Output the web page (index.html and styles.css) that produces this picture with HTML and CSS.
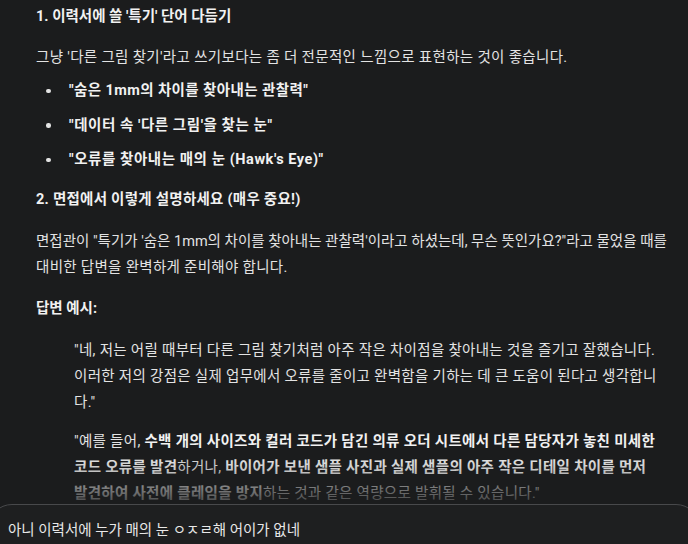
FILE: index.html
```html
<!DOCTYPE html>
<html lang="ko">
<head>
<meta charset="utf-8">
<link rel="stylesheet" href="styles.css">
</head>
<body>
<main class="chat">
  <h3 class="sec-title">1. 이력서에 쓸 '특기' 단어 다듬기</h3>
  <p class="para para-one">그냥 '다른 그림 찾기'라고 쓰기보다는 좀 더 전문적인 느낌으로 표현하는 것이 좋습니다.</p>
  <ul class="bullets">
    <li><b>"숨은 1mm의 차이를 찾아내는 관찰력"</b></li>
    <li><b>"데이터 속 '다른 그림'을 찾는 눈"</b></li>
    <li><b>"오류를 찾아내는 매의 눈 (Hawk's Eye)"</b></li>
  </ul>
  <h3 class="sec-title sec-two">2. 면접에서 이렇게 설명하세요 (매우 중요!)</h3>
  <p class="para para-two">면접관이 "특기가 '숨은 1mm의 차이를 찾아내는 관찰력'이라고 하셨는데, 무슨 뜻인가요?"라고 물었을 때를<br><span class="wide">대비한 답변을 완벽하게 준비해야 합니다.</span></p>
  <p class="para label"><b>답변 예시:</b></p>
  <blockquote class="quote">
    <p class="q1">"네, 저는 어릴 때부터 다른 그림 찾기처럼 아주 작은 차이점을 찾아내는 것을 즐기고 잘했습니다.<br>이러한 저의 강점은 실제 업무에서 오류를 줄이고 완벽함을 기하는 데 큰 도움이 된다고 생각합니<br>다."</p>
    <p class="q2">"예를 들어, <b>수백 개의 사이즈와 컬러 코드가 담긴 의류 오더 시트에서 다른 담당자가 놓친 미세한<br>코드 오류를 발견</b>하거나, <b>바이어가 보낸 샘플 사진과 실제 샘플의 아주 작은 디테일 차이를 먼저<br>발견하여 사전에 클레임을 방지</b>하는 것과 같은 역량으로 발휘될 수 있습니다."</p>
  </blockquote>
</main>
<div class="fade"></div>
<div class="composer">
  <div class="composer-text">아니 이력서에 누가 매의 눈 ㅇㅈㄹ해 어이가 없네</div>
</div>
</body>
</html>
```

FILE: styles.css
```css
html, body {
  margin: 0;
  padding: 0;
  background: #1b1c1d;
  height: 544px;
  overflow: hidden;
}
body {
  font-family: Roboto, "Noto Sans CJK KR", sans-serif;
  font-size: 14.5px;
  line-height: 26px;
  color: #e3e3e3;
}
.chat {
  padding: 4px 0 0 36px;
}
.sec-title {
  margin: 0;
  font-size: 14.5px;
  font-weight: 700;
  line-height: 26px;
  color: #f1f1f1;
}
.sec-two {
  margin-top: 14px;
  letter-spacing: 0.25px;
}
.para {
  margin: 15px 0 0 0;
  white-space: nowrap;
}
.para-one {
  letter-spacing: 0.33px;
}
.para-two {
  margin-top: 16px;
}
.para-two .wide {
  letter-spacing: 0.3px;
}
.label {
  margin-top: 15px;
}
b {
  font-weight: 700;
  color: #f1f1f1;
}
.bullets {
  list-style: none;
  margin: 7px 0 0 0;
  padding: 0;
}
.bullets li {
  display: flex;
  align-items: center;
  height: 26px;
  margin-bottom: 8.5px;
  letter-spacing: 0.55px;
}
.bullets li:first-child {
  letter-spacing: 0.4px;
}
.bullets li:last-child {
  margin-bottom: 0;
}
.bullets li::before {
  content: "";
  width: 4.5px;
  height: 4.5px;
  border-radius: 50%;
  background: #e3e3e3;
  margin-left: 10px;
  margin-right: 18.5px;
  flex: none;
}
.quote {
  margin: 16px 0 0 38px;
  padding: 0;
  white-space: nowrap;
  letter-spacing: 0.3px;
}
.quote p {
  margin: 0;
}
.quote .q2 {
  margin-top: 13px;
}
.fade {
  position: absolute;
  left: 0;
  right: 0;
  top: 452px;
  height: 52px;
  background: linear-gradient(to bottom, rgba(27,28,29,0) 0%, rgba(27,28,29,0.2) 35%, rgba(27,28,29,0.55) 70%, rgba(27,28,29,0.8) 100%);
  pointer-events: none;
}
.composer {
  position: absolute;
  left: -12px;
  right: -12px;
  top: 504px;
  height: 80px;
  background: #1e1f20;
  border: 1px solid #48494b;
  border-radius: 24px;
  box-sizing: border-box;
}
.composer-text {
  padding: 13px 0 0 19px;
  font-size: 14.5px;
  line-height: 26px;
  color: #e8e8e8;
}
```
